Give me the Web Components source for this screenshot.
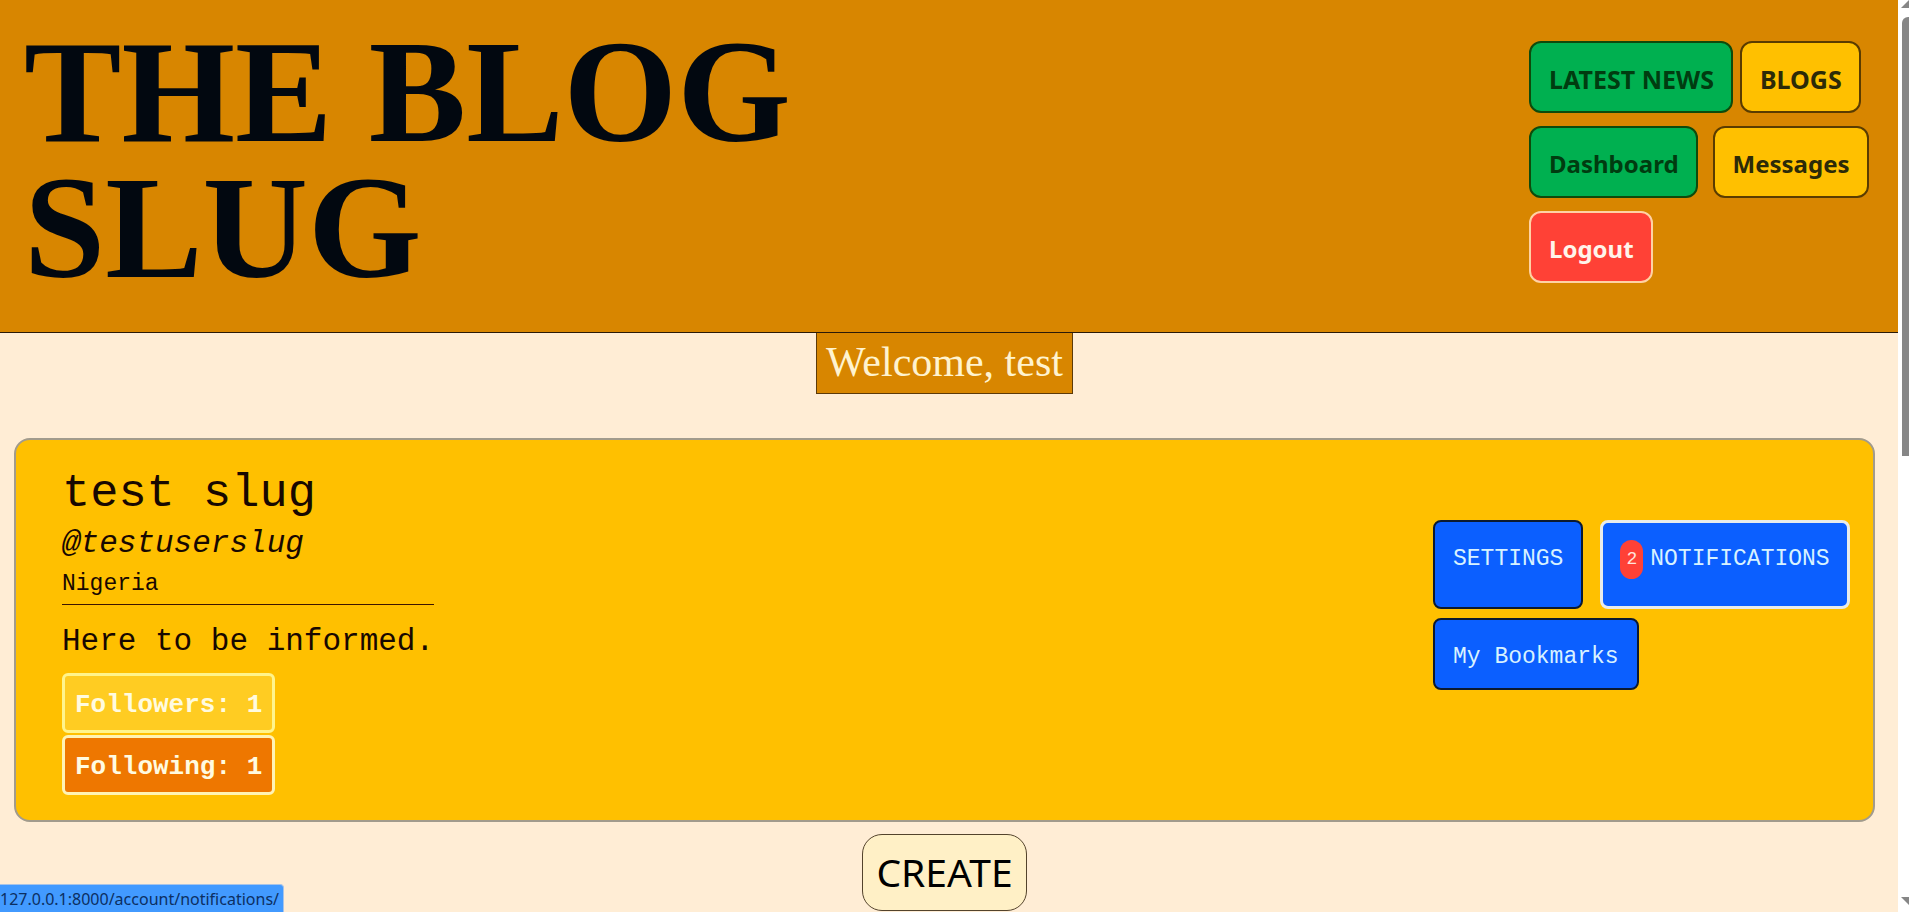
<!DOCTYPE html>
<html lang="en">
<head>
<meta charset="utf-8">
<title>The Blog Slug</title>
<style>
  html, body { margin: 0; min-height: 100%; }
  body { background: #ffedd5; color: #000; font-family: "Liberation Mono", monospace; }
</style>
</head>
<body>
<app-frame>
  <site-header>
    <nav-link href="#news" tone="green" caps>LATEST NEWS</nav-link>
    <nav-link href="#blogs" tone="amber" class="snug" caps>BLOGS</nav-link>
    <nav-link href="#dashboard" tone="green">Dashboard</nav-link>
    <nav-link href="#messages" tone="amber">Messages</nav-link>
    <nav-link href="#logout" tone="red">Logout</nav-link>
  </site-header>
  <welcome-tag>Welcome, test</welcome-tag>
  <profile-card>
    <span slot="name">test slug</span>
    <span slot="handle">@testuserslug</span>
    <span slot="country">Nigeria</span>
    <span slot="bio">Here to be informed.</span>
    <follow-link slot="follow" href="#followers">Followers: 1</follow-link>
    <follow-link slot="follow" href="#following" tone="orange">Following: 1</follow-link>
    <action-link slot="actions" href="#settings">SETTINGS</action-link>
    <action-link slot="actions" href="#notifications" count="2" active>NOTIFICATIONS</action-link>
    <action-link slot="actions" href="#bookmarks" short>My Bookmarks</action-link>
  </profile-card>
  <create-button>CREATE</create-button>
  <scroll-rail slot="rail"></scroll-rail>
  <status-bar slot="status">127.0.0.1:8000/account/notifications/</status-bar>
</app-frame>
<script>
  const define = (name, html, setup) => customElements.define(name, class extends HTMLElement {
    constructor() {
      super();
      const template = document.createElement('template');
      template.innerHTML = html;
      this.attachShadow({ mode: 'open' }).append(template.content.cloneNode(true));
    }
    connectedCallback() { if (setup) setup(this, this.shadowRoot); }
  });
  const setHref = (host, root) => { root.querySelector('a').href = host.getAttribute('href'); };

  define('app-frame', `
    <style>
      :host { display: grid; grid-template-columns: minmax(0, 1fr) 11px; min-height: 100vh; }
      main { display: flex; flex-direction: column; }
    </style>
    <main><slot></slot></main>
    <slot name="rail"></slot>
    <slot name="status"></slot>`);

  define('site-header', `
    <style>
      :host { display: flex; justify-content: space-between; align-items: flex-start; box-sizing: border-box;
        min-height: 333px; padding: 24px; background: #d88600; border-bottom: 1px solid #2a1a08; }
      h1 { margin: 0; max-width: 800px; font: bold 146px/136px "Liberation Serif", serif; color: #020810; }
      nav { display: flex; flex-wrap: wrap; align-content: flex-start; gap: 13px 15px; width: 345px; margin-top: 17px; }
      ::slotted(.snug) { margin-left: -8px; }
    </style>
    <h1>THE BLOG SLUG</h1>
    <nav><slot></slot></nav>`);

  define('nav-link', `
    <style>
      :host { display: block; }
      a { display: block; padding: 19px 17px 15px 18px; border: 2px solid #5a3c00; border-radius: 12px; background: #ffc000;
        color: #2c2a08; font: bold 24px/34px "Noto Sans", sans-serif; text-decoration: none; white-space: nowrap; }
      :host([caps]) a { font-size: 25px; }
      :host([tone="green"]) a { background: #00b050; color: #003c10; border-color: #0f4a0c; }
      :host([tone="red"]) a { background: #ff4136; color: #fff4ea; border-color: #ffd2a4; }
    </style>
    <a><slot></slot></a>`, setHref);

  define('welcome-tag', `
    <style>
      :host { display: flex; justify-content: center; padding: 0 24px 0 15px; margin-bottom: 44px; }
      p { margin: 0; padding: 6px 9px 8px; border: 1px solid #5c3a08; border-top: 0; background: #d88600;
        color: #fff3cf; font: 42px/46px "Liberation Serif", serif; }
    </style>
    <p><slot></slot></p>`);

  define('profile-card', `
    <style>
      :host { display: block; padding: 0 23px 0 14px; margin-bottom: 12px; }
      section { display: flex; justify-content: space-between; align-items: flex-start; padding: 24px 20px 25px 46px;
        border: 2px solid #a29b8c; border-radius: 16px; background: #ffc000; color: #180800; }
      .who { width: fit-content; }
      h2 { margin: 0; font-weight: normal; font-size: 47px; line-height: 60px; }
      p { margin: 0; font-size: 31px; line-height: 40px; }
      .handle { font-style: italic; }
      .country { font-size: 23px; border-bottom: 1px solid #3c1400; margin-bottom: 17px; }
      .follow { display: flex; flex-direction: column; align-items: flex-start; gap: 2px; margin-top: 11px; }
      nav { display: flex; flex-wrap: wrap; gap: 9px 17px; width: 420px; margin-top: 56px; }
    </style>
    <section>
      <div class="who">
        <h2><slot name="name"></slot></h2>
        <p class="handle"><slot name="handle"></slot></p>
        <p class="country"><slot name="country"></slot></p>
        <p><slot name="bio"></slot></p>
        <div class="follow"><slot name="follow"></slot></div>
      </div>
      <nav><slot name="actions"></slot></nav>
    </section>`);

  define('follow-link', `
    <style>
      :host { display: block; }
      a { display: block; padding: 14px 10px 10px; border: 3px solid #fff48c; border-radius: 6px; background: #ffcc22;
        color: #fffbe0; font-size: 26px; line-height: 30px; font-weight: bold; text-decoration: none; }
      :host([tone="orange"]) a { background: #ee7700; border-color: #fff3b4; }
    </style>
    <a><slot></slot></a>`, setHref);

  define('action-link', `
    <style>
      :host { display: block; }
      a { display: flex; align-items: center; gap: 7px; padding: 18px 18px 28px; border: 2px solid #0c1a30; border-radius: 8px;
        background: #0b5fff; color: #d8f2ff; font-size: 23px; line-height: 39px; text-decoration: none; white-space: nowrap; }
      :host([active]) a { border: 3px solid #e8ecec; padding: 17px 17px 27px; }
      :host([short]) a { padding: 18px 18px 11px; }
      .count { padding: 0 6px; border-radius: 12px; background: #ff4136; color: #ffe4dc; font-size: 18px; }
      .count[hidden] { display: none; }
    </style>
    <a><span class="count" hidden></span><span><slot></slot></span></a>`, (host, root) => {
      setHref(host, root);
      const count = root.querySelector('.count');
      count.textContent = host.getAttribute('count') || '';
      count.hidden = !count.textContent;
    });

  define('create-button', `
    <style>
      :host { display: flex; justify-content: center; padding: 0 24px 0 15px; }
      button { padding: 11px 13px 13px; border: 1px solid #54432c; border-radius: 20px; background: #fff0c6; color: #000;
        font: 39px/51px "Noto Sans", sans-serif; }
    </style>
    <button type="button"><slot></slot></button>`);

  define('scroll-rail', `
    <style>
      :host { display: flex; flex-direction: column; justify-content: space-between; position: sticky; top: 0;
        height: 100vh; background: #fff; overflow: hidden; }
      svg { display: block; width: 11px; height: 17px; flex: none; }
      .track { flex: 1; padding-left: 4px; }
      .thumb { height: 50%; background: #868686; border-radius: 6px 0 0 0; }
    </style>
    <svg viewBox="0 0 11 17" aria-hidden="true"><path d="M3 8L11 0V8Z" fill="#868686"/></svg>
    <div class="track"><div class="thumb"></div></div>
    <svg viewBox="0 0 11 17" aria-hidden="true"><path d="M3 2H11V10Z" fill="#868686"/></svg>`);

  define('status-bar', `
    <style>
      :host { position: fixed; left: 0; bottom: 0; padding: 3px 4px 1px 0; border-top: 1px solid #a8c4e8;
        border-right: 1px solid #a8c4e8; border-radius: 0 4px 0 0; background: #429aff; color: #0c2f62;
        font: 16px/23px "Noto Sans", sans-serif; white-space: nowrap; }
    </style>
    <slot></slot>`);
</script>
</body>
</html>
